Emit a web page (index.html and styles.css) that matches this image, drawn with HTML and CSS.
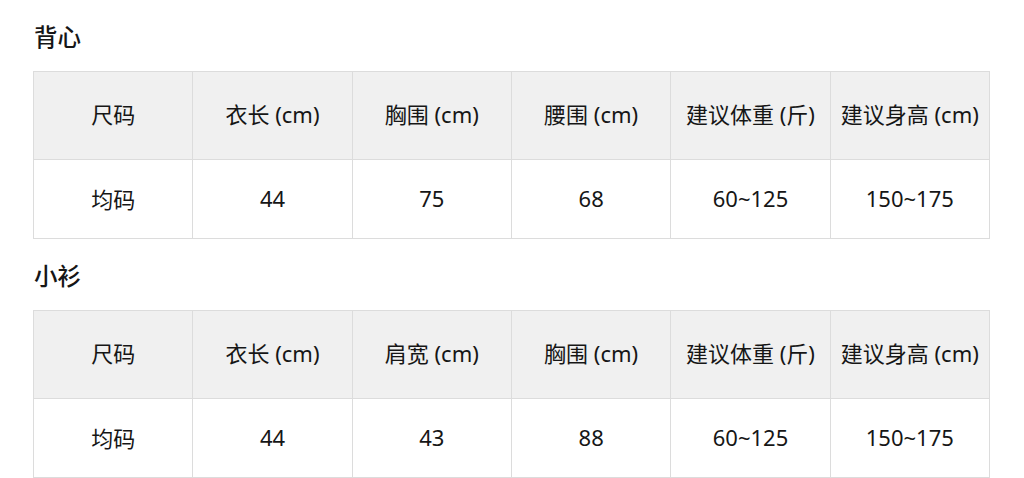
FILE: index.html
```html
<!DOCTYPE html>
<html lang="zh-CN">
<head>
<meta charset="utf-8">
<link rel="stylesheet" href="styles.css">
</head>
<body>
<main class="page">
  <section class="block">
    <h2 class="title">背心</h2>
    <table class="size-table">
      <thead>
        <tr><th>尺码</th><th>衣长 (cm)</th><th>胸围 (cm)</th><th>腰围 (cm)</th><th>建议体重 (斤)</th><th>建议身高 (cm)</th></tr>
      </thead>
      <tbody>
        <tr><td>均码</td><td>44</td><td>75</td><td>68</td><td>60~125</td><td>150~175</td></tr>
      </tbody>
    </table>
  </section>
  <section class="block">
    <h2 class="title">小衫</h2>
    <table class="size-table">
      <thead>
        <tr><th>尺码</th><th>衣长 (cm)</th><th>肩宽 (cm)</th><th>胸围 (cm)</th><th>建议体重 (斤)</th><th>建议身高 (cm)</th></tr>
      </thead>
      <tbody>
        <tr><td>均码</td><td>44</td><td>43</td><td>88</td><td>60~125</td><td>150~175</td></tr>
      </tbody>
    </table>
  </section>
</main>
</body>
</html>
```
FILE: styles.css
```css
html, body {
  margin: 0;
  padding: 0;
  background: #ffffff;
}
body {
  font-family: "Noto Sans", "Noto Sans CJK SC", sans-serif;
  color: #161616;
}
.page {
  padding: 21px 34px 0 33px;
  display: flex;
  flex-direction: column;
  gap: 21px;
}
.block {
  display: flex;
  flex-direction: column;
  gap: 18px;
}
.title {
  margin: 0 0 0 1px;
  font-size: 23.5px;
  line-height: 32px;
  font-weight: 500;
}
.size-table {
  width: 957px;
  border-collapse: collapse;
  table-layout: fixed;
}
.size-table th,
.size-table td {
  border: 1px solid #dcdcdc;
  text-align: center;
  padding: 0;
  font-size: 22px;
  font-weight: 400;
  white-space: nowrap;
}
.size-table th {
  background: #f0f0f0;
  height: 82px;
  padding-bottom: 5px;
}
.size-table td {
  height: 75px;
  padding-bottom: 3px;
}
```
